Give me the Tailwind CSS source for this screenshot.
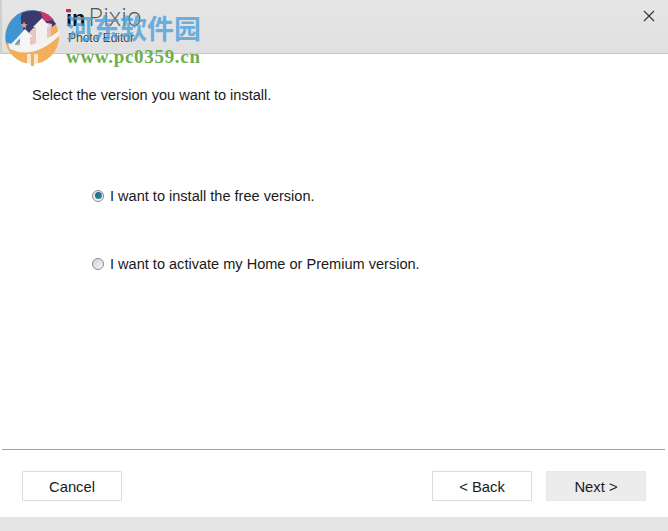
<!doctype html>
<html>
<head>
<meta charset="utf-8">
<script src="https://cdn.jsdelivr.net/npm/@tailwindcss/browser@4"></script>
</head>
<body class="bg-white">
<div class="relative w-[668px] h-[531px] overflow-hidden flex flex-col bg-white font-['Liberation_Sans',Arial,sans-serif] text-[#1a1a1a]">
  <!-- header -->
  <header class="h-[54px] shrink-0 flex justify-between bg-gradient-to-b from-[#e6e6e6] to-[#e0e0e0] border-b border-[#c4c4c4] border-l-2 border-l-[#d0d0d0]">
    <div class="pl-[64px] pt-[4px] flex flex-col">
      <div class="flex items-baseline leading-[24px] h-[24px]">
        <span class="relative text-[22px] font-bold text-[#111]">in<span class="absolute left-0 top-[2px] w-[5px] h-[3px] bg-[#d8264e]"></span></span>
        <span class="ml-[3px] text-[25px] font-light text-[#555] font-['Open_Sans',sans-serif]">Pixio</span>
      </div>
      <div class="text-[12px] leading-[12px] mt-[4px] text-[#444] pl-[2px]">Photo Editor</div>
    </div>
    <div class="pr-[12px] pt-[9px]">
      <svg width="14" height="14" viewBox="0 0 14 14" fill="none" stroke="#333" stroke-width="1.1"><path d="M2 2 L12 12 M12 2 L2 12"/></svg>
    </div>
  </header>

  <!-- watermark logo -->
  <svg class="absolute left-0 top-0" width="66" height="70" viewBox="0 0 66 70">
    <circle cx="32" cy="37" r="27" fill="#f2ae5a"/>
    <path d="M6 42 A 27 27 0 0 1 34 10 Q46 12 56 24 Q30 32 12 48 Z" fill="#3f95d3"/>
    <path d="M22 13 A 27 27 0 0 1 56 24 L42 34 L26 34 Q18 22 22 13 Z" fill="#3a3a6e"/>
    <path d="M40 11 A 27 27 0 0 1 54 20 L44 22 Z" fill="#c2386f"/>
    <path d="M28 34 Q38 20 52 24 L50 40 L30 46 Z" fill="#e8c4c4"/>
    <path d="M8 43 Q32 52 60 30 L59 36 Q34 60 10 49 Z" fill="#f3f3f3"/>
    <path d="M9 46 Q16 38 24 33 L24 35 Q16 41 12 50 Z" fill="#eef2f5"/>
    <path d="M17 38 L25 29 L33 37 L30 37 L30 50 L20 47 L20 38 Z" fill="#f6f6f6"/>
    <path d="M33 27 L42 18 L50 27 L47 27 L47 40 L36 46 L36 27 Z" fill="#f4f0ee"/>
    <rect x="27" y="54" width="11" height="12" fill="#fff" opacity=".7"/>
    <rect x="31" y="54" width="3" height="12" fill="#f2ae5a"/>
    <path d="M23 24 l1 -2.500 l1 2.500 l2.500 .5 l-2 1.500 l.5 2.500 l-2 -1.500 l-2 1.500 l.5 -2.500 l-2 -1.500 Z" fill="#d9a0a0"/>
  </svg>
  <div class="absolute left-[66px] top-[11px] text-[27px] leading-[34px] whitespace-nowrap font-bold text-[#4a9fdc]/80 font-['Noto_Sans_CJK_SC',sans-serif]">河东软件园</div>
  <div class="absolute left-[66px] top-[46px] text-[19px] leading-[22px] whitespace-nowrap font-bold text-[#6fae4f] tracking-[0.7px] font-['Liberation_Serif',serif]">www.pc0359.cn</div>

  <!-- body -->
  <main class="flex-1 pt-[33px] text-[14.55px] leading-[16px]">
    <p class="pl-[32px]">Select the version you want to install.</p>
    <div class="pl-[92px] pt-[85px] flex flex-col gap-[52px]">
      <label class="flex items-center gap-[6px] h-[16px]">
        <span class="w-[12px] h-[12px] rounded-full border border-[#8a8a8a] bg-gradient-to-br from-[#e4e4e4] to-[#fafafa] flex items-center justify-center -mt-px">
          <span class="w-[7px] h-[7px] rounded-full bg-gradient-to-br from-[#1d5f7e] to-[#2f8fb3]"></span>
        </span>
        <span>I want to install the free version.</span>
      </label>
      <label class="flex items-center gap-[6px] h-[16px]">
        <span class="w-[12px] h-[12px] rounded-full border border-[#8a8a8a] bg-gradient-to-br from-[#d4d4d4] to-[#f6f6f6] -mt-px"></span>
        <span>I want to activate my Home or Premium version.</span>
      </label>
    </div>
  </main>

  <!-- footer -->
  <footer class="shrink-0">
    <div class="ml-[2px] mr-[3px] h-px bg-[#a0a0a0]"></div>
    <div class="h-[67px] flex items-start pl-[22px] pr-[22px] pt-[21px] text-[14.8px]">
      <button class="w-[100px] h-[30px] pt-[2px] border border-[#dcdcdc] rounded-[1px] bg-white">Cancel</button>
      <div class="ml-auto flex gap-[14px]">
        <button class="w-[100px] h-[30px] pt-[2px] border border-[#dcdcdc] bg-white">&lt; Back</button>
        <button class="w-[100px] h-[30px] pt-[2px] border border-[#e8e8e8] bg-[#ececec]">Next &gt;</button>
      </div>
    </div>
    <div class="h-[14px] bg-[#e5e5e5]"></div>
  </footer>
</div>
</body>
</html>
